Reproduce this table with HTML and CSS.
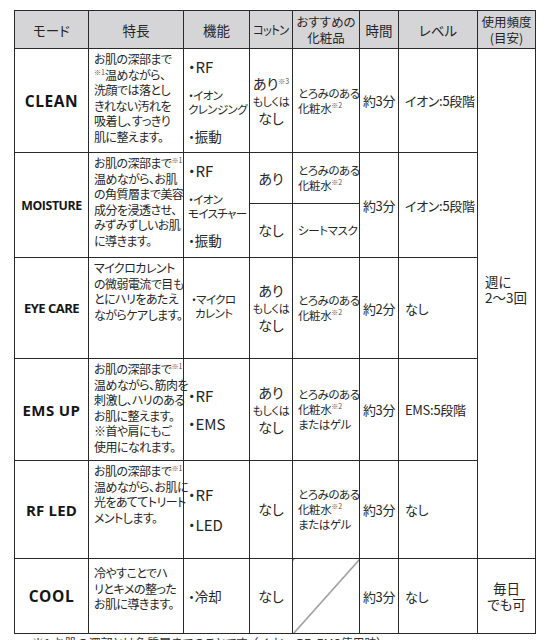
FILE: index.html
```html
<!DOCTYPE html>
<html lang="ja">
<head>
<meta charset="utf-8">
<link rel="stylesheet" href="styles.css">
</head>
<body>
<table class="modes">
  <colgroup>
    <col class="c-mode"><col class="c-feat"><col class="c-func"><col class="c-cot"><col class="c-cos"><col class="c-time"><col class="c-lvl"><col class="c-freq">
  </colgroup>
  <thead>
    <tr class="r-head">
      <th>モード</th>
      <th>特長</th>
      <th>機能</th>
      <th class="th-small"><span class="squeeze">コットン</span></th>
      <th class="th-two">おすすめの<br>化粧品</th>
      <th>時間</th>
      <th>レベル</th>
      <th class="th-two">使用頻度<br>(目安)</th>
    </tr>
  </thead>
  <tbody>
    <tr class="r-clean">
      <td class="mode m-clean">CLEAN</td>
      <td class="feat">お肌の深部まで<br><span class="note">※1</span>温めながら、<br>洗顔では落とし<br>きれない汚れを<br>吸着し、すっきり<br>肌に整えます。</td>
      <td class="func">
        <div class="fl">
          <span class="f-big">・RF</span>
          <span class="f-small">・イオン<br>クレンジング</span>
          <span class="f-mid">・振動</span>
        </div>
      </td>
      <td class="cot">あり<span class="note">※3</span><br><span class="or">もしくは</span><br>なし</td>
      <td class="cos">とろみのある<br>化粧水<span class="note">※2</span></td>
      <td class="time">約3分</td>
      <td class="lvl">イオン:5段階</td>
      <td class="freq" rowspan="6">週に<br>2〜3回</td>
    </tr>
    <tr class="r-moist-a">
      <td class="mode m-moist" rowspan="2">MOISTURE</td>
      <td class="feat" rowspan="2">お肌の深部まで<span class="note">※1</span><br>温めながら、お肌<br>の角質層まで美容<br>成分を浸透させ、<br>みずみずしいお肌<br>に導きます。</td>
      <td class="func" rowspan="2">
        <div class="fl">
          <span class="f-big">・RF</span>
          <span class="f-small">・イオン<br>モイスチャー</span>
          <span class="f-mid">・振動</span>
        </div>
      </td>
      <td class="cot">あり</td>
      <td class="cos">とろみのある<br>化粧水<span class="note">※2</span></td>
      <td class="time" rowspan="2">約3分</td>
      <td class="lvl" rowspan="2">イオン:5段階</td>
    </tr>
    <tr class="r-moist-b">
      <td class="cot">なし</td>
      <td class="cos">シートマスク</td>
    </tr>
    <tr class="r-eye">
      <td class="mode m-eye">EYE CARE</td>
      <td class="feat">マイクロカレント<br>の微弱電流で目も<br>とにハリをあたえ<br>ながらケアします。</td>
      <td class="func func-c"><span class="f-small">・マイクロ<br>&nbsp;&nbsp;カレント</span></td>
      <td class="cot">あり<br><span class="or">もしくは</span><br>なし</td>
      <td class="cos">とろみのある<br>化粧水<span class="note">※2</span></td>
      <td class="time">約2分</td>
      <td class="lvl">なし</td>
    </tr>
    <tr class="r-ems">
      <td class="mode m-ems">EMS UP</td>
      <td class="feat">お肌の深部まで<span class="note">※1</span><br>温めながら、筋肉を<br>刺激し、ハリのある<br>お肌に整えます。<br>※首や肩にもご<br>使用になれます。</td>
      <td class="func">
        <div class="fl fl-2">
          <span class="f-big">・RF</span>
          <span class="f-big">・EMS</span>
        </div>
      </td>
      <td class="cot">あり<br><span class="or">もしくは</span><br>なし</td>
      <td class="cos">とろみのある<br>化粧水<span class="note">※2</span><br>またはゲル</td>
      <td class="time">約3分</td>
      <td class="lvl">EMS:5段階</td>
    </tr>
    <tr class="r-rf">
      <td class="mode m-rf">RF LED</td>
      <td class="feat">お肌の深部まで<span class="note">※1</span><br>温めながら、お肌に<br>光をあててトリート<br>メントします。</td>
      <td class="func">
        <div class="fl fl-2 fl-3">
          <span class="f-big">・RF</span>
          <span class="f-big">・LED</span>
        </div>
      </td>
      <td class="cot">なし</td>
      <td class="cos">とろみのある<br>化粧水<span class="note">※2</span><br>またはゲル</td>
      <td class="time">約3分</td>
      <td class="lvl">なし</td>
    </tr>
    <tr class="r-cool">
      <td class="mode m-cool">COOL</td>
      <td class="feat feat-c">冷やすことでハ<br>リとキメの整った<br>お肌に導きます。</td>
      <td class="func"><span class="f-mid">・冷却</span></td>
      <td class="cot">なし</td>
      <td class="cos cos-none"></td>
      <td class="time">約3分</td>
      <td class="lvl">なし</td>
      <td class="freq freq-c">毎日<br>でも可</td>
    </tr>
  </tbody>
</table>
<p class="footnote">※1 お肌の深部とは角質層までのことです。（イオン・RF・EMS使用時）</p>
</body>
</html>
```

FILE: styles.css
```css
html, body {
  margin: 0;
  padding: 0;
  background: #ffffff;
  height: 640px;
  overflow: hidden;
}

body {
  font-family: "Noto Sans CJK JP", "Noto Sans", sans-serif;
  font-feature-settings: "palt";
  color: #262626;
}

.modes {
  border-collapse: collapse;
  table-layout: fixed;
  width: 521px;
  margin: 10px 0 0 14px;
  border: 1.5px solid #1e1e1e;
}

.c-mode { width: 74px; }
.c-feat { width: 95px; }
.c-func { width: 66px; }
.c-cot { width: 43px; }
.c-cos { width: 67px; }
.c-time { width: 39px; }
.c-lvl { width: 79px; }
.c-freq { width: 58px; }

.modes th,
.modes td {
  border: 1px solid #2a2a2a;
  padding: 0;
  vertical-align: middle;
}

.modes th {
  background: #d5d5d7;
  font-weight: 400;
  font-size: 13.5px;
  line-height: 16px;
  text-align: center;
  white-space: nowrap;
}

.modes th.th-small {
  font-size: 12.5px;
}

.squeeze {
  display: inline-block;
  letter-spacing: -0.8px;
  transform: scaleX(0.9);
}

.modes th.th-two {
  font-size: 12.5px;
  line-height: 16px;
}

.r-head { height: 38px; }
.r-clean { height: 104px; }
.r-moist-a { height: 51px; }
.r-moist-b { height: 54px; }
.r-eye { height: 101px; }
.r-ems { height: 102px; }
.r-rf { height: 98px; }
.r-cool { height: 75px; }

.mode {
  font-family: "Open Sans", "Noto Sans", sans-serif;
  font-weight: 700;
  text-align: center;
  color: #151515;
  white-space: nowrap;
}

.m-clean { font-size: 15.5px; letter-spacing: 0.6px; }
.m-moist { font-size: 12.3px; letter-spacing: -0.4px; }
.m-eye { font-size: 13px; letter-spacing: -0.5px; }
.m-ems { font-size: 15px; letter-spacing: 0.4px; }
.m-rf { font-size: 15px; letter-spacing: 0.2px; }
.m-cool { font-size: 15.5px; letter-spacing: 0.6px; }

.feat {
  font-size: 12px;
  line-height: 15.6px;
  letter-spacing: -0.55px;
  padding: 2px 0 0 5px !important;
  vertical-align: top !important;
  white-space: nowrap;
}

.feat-c {
  padding-top: 6px !important;
}

.note {
  font-size: 7px;
  vertical-align: 5px;
  line-height: 0;
  color: #555;
  letter-spacing: 0;
}

.func {
  padding-left: 4px !important;
  white-space: nowrap;
  font-size: 11px;
  line-height: 13px;
}

.fl {
  display: flex;
  flex-direction: column;
  justify-content: space-between;
  height: 86px;
}

.fl-2 {
  justify-content: center;
  gap: 10px;
}

.fl-3 {
  height: 70px;
  gap: 12px;
}

.f-big {
  font-size: 15px;
  line-height: 18px;
}

.f-mid {
  font-size: 13.5px;
  line-height: 16px;
}

.f-small {
  font-size: 11.5px;
  line-height: 14px;
  letter-spacing: -0.6px;
}

.func-c {
  padding-left: 7px !important;
  padding-bottom: 4px !important;
}

.cot {
  text-align: center;
  font-size: 14px;
  line-height: 17px;
  white-space: nowrap;
}

.or {
  font-size: 11px;
  letter-spacing: -0.3px;
}

.cos {
  font-size: 11.5px;
  line-height: 15px;
  letter-spacing: -0.4px;
  padding-left: 5px !important;
  white-space: nowrap;
}

.cos-none {
  background: linear-gradient(to bottom right, transparent calc(50% - 0.7px), #222 50%, transparent calc(50% + 0.7px));
}

.time {
  font-size: 13px;
  letter-spacing: -0.4px;
  text-align: center;
  white-space: nowrap;
}

.lvl {
  font-size: 13px;
  letter-spacing: -0.3px;
  padding-left: 6px !important;
  white-space: nowrap;
}

.freq {
  font-size: 13.5px;
  line-height: 16px;
  padding: 0 0 30px 7px !important;
  white-space: nowrap;
}

.freq-c {
  text-align: center;
  padding: 0 !important;
}

.footnote {
  margin: 2px 0 0 32px;
  font-size: 12px;
  line-height: 14px;
  color: #333;
}
```
